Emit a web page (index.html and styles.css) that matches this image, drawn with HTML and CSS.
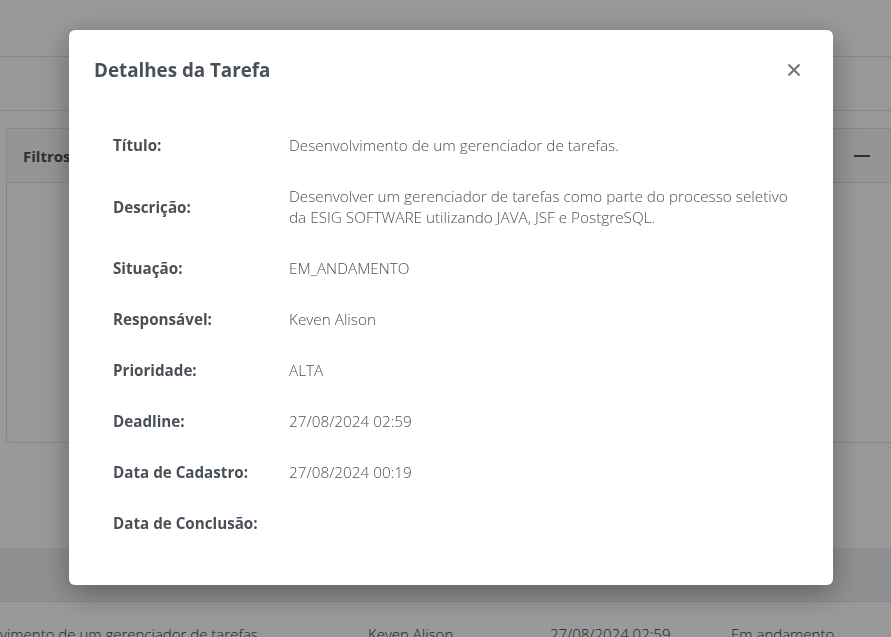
FILE: index.html
```html
<!DOCTYPE html>
<html lang="pt-BR">
<head>
<meta charset="utf-8">
<title>Detalhes da Tarefa</title>
<link rel="stylesheet" href="styles.css">
</head>
<body>
<div class="page">
  <header class="topbar"></header>
  <div class="subbar"></div>
  <section class="card">
    <div class="card-head">
      <span class="card-title">Filtros</span>
      <span class="minus"></span>
    </div>
    <div class="card-body"></div>
  </section>
  <div class="spacer"></div>
  <div class="thead"></div>
  <div class="trow">
    <span class="c1">vimento de um gerenciador de tarefas</span>
    <span class="c2">Keven Alison</span>
    <span class="c3">27/08/2024 02:59</span>
    <span class="c4">Em andamento</span>
  </div>
</div>
<div class="overlay"></div>
<div class="modal" role="dialog">
  <div class="modal-head">
    <h2 class="modal-title">Detalhes da Tarefa</h2>
    <button class="close" aria-label="Fechar">
      <svg width="14" height="14" viewBox="0 0 14 14"><path d="M1.5 1.5 L12.5 12.5 M12.5 1.5 L1.5 12.5" stroke="#6c757d" stroke-width="2" fill="none"/></svg>
    </button>
  </div>
  <div class="modal-body">
    <div class="grid">
      <div class="lbl">Título:</div><div class="val">Desenvolvimento de um gerenciador de tarefas.</div>
      <div class="lbl">Descrição:</div><div class="val">Desenvolver um gerenciador de tarefas como parte do processo seletivo<br>da ESIG SOFTWARE utilizando JAVA, JSF e PostgreSQL.</div>
      <div class="lbl">Situação:</div><div class="val">EM_ANDAMENTO</div>
      <div class="lbl">Responsável:</div><div class="val">Keven Alison</div>
      <div class="lbl">Prioridade:</div><div class="val">ALTA</div>
      <div class="lbl">Deadline:</div><div class="val">27/08/2024 02:59</div>
      <div class="lbl">Data de Cadastro:</div><div class="val">27/08/2024 00:19</div>
      <div class="lbl">Data de Conclusão:</div><div class="val"></div>
    </div>
  </div>
</div>
</body>
</html>
```
FILE: styles.css
```css
html, body {
  margin: 0;
  padding: 0;
  height: 100%;
  overflow: hidden;
}
body {
  font-family: "Open Sans", "Liberation Sans", sans-serif;
  color: #495057;
  background: #ffffff;
}
.page {
  display: flex;
  flex-direction: column;
  height: 637px;
}
.topbar {
  height: 56px;
  background: #ffffff;
  border-bottom: 1px solid #dee2e6;
  flex: none;
}
.subbar {
  height: 53px;
  background: #ffffff;
  border-bottom: 1px solid #dee2e6;
  flex: none;
}
.card {
  margin: 17px 0 0 6px;
  height: 313px;
  border: 1px solid #dee2e6;
  border-right: none;
  border-radius: 4px 0 0 4px;
  background: #ffffff;
  display: flex;
  flex-direction: column;
  flex: none;
}
.card-head {
  height: 53px;
  border-bottom: 1px solid #dee2e6;
  background: #f8f9fa;
  display: flex;
  align-items: center;
  justify-content: space-between;
  padding: 0 21px 0 16px;
}
.card-title {
  font-weight: 700;
  font-size: 15px;
}
.minus {
  width: 16px;
  height: 2px;
  background: #495057;
}
.spacer {
  height: 105px;
  flex: none;
}
.thead {
  height: 53px;
  background: #eef0f2;
  border-bottom: 1px solid #dee2e6;
  flex: none;
}
.trow {
  position: relative;
  flex: none;
  height: 40px;
  font-size: 15px;
  font-weight: 300;
  color: #343a40;
}
.trow span {
  position: absolute;
  top: 22px;
  white-space: nowrap;
}
.trow .c1 { left: 0; }
.trow .c2 { left: 368px; }
.trow .c3 { left: 550px; }
.trow .c4 { left: 731px; }

.overlay {
  position: fixed;
  inset: 0;
  background: rgba(0, 0, 0, 0.4);
}
.modal {
  position: fixed;
  left: 69px;
  top: 30px;
  width: 764px;
  height: 555px;
  background: #ffffff;
  border-radius: 6px;
  box-shadow: 0 8px 30px rgba(0, 0, 0, 0.35);
  display: flex;
  flex-direction: column;
}
.modal-head {
  display: flex;
  align-items: center;
  justify-content: space-between;
  padding: 24px 27px 24px 25px;
}
.modal-title {
  margin: 0;
  font-size: 18.8px;
  line-height: 32px;
  font-weight: 700;
  color: #495057;
}
.close {
  border: none;
  background: none;
  padding: 0;
  width: 24px;
  height: 24px;
  display: flex;
  align-items: center;
  justify-content: center;
}
.modal-body {
  padding: 10px 25px 36px 44px;
}
.grid {
  display: grid;
  grid-template-columns: 176px 1fr;
}
.lbl, .val {
  padding: 15px 0;
  line-height: 21px;
  display: flex;
  align-items: center;
}
.lbl {
  font-size: 15.2px;
  font-weight: 700;
  color: #495057;
}
.val {
  font-size: 15.3px;
  font-weight: 300;
  color: #495057;
  display: block;
  align-self: center;
}
```
